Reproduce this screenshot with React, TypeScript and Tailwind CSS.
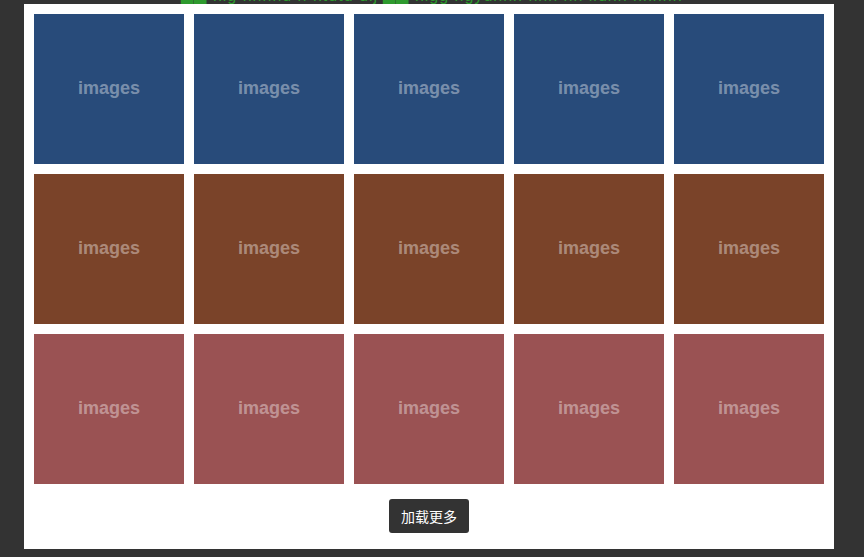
const rows = [
  "bg-[#284b7a]",
  "bg-[#7a4329]",
  "bg-[#9a5253]",
];

function Tile({ color }: { color: string }) {
  return (
    <div className={`${color} w-[150px] h-[150px] flex items-center justify-center`}>
      <span className="pb-[2px] text-white/40 font-bold text-[18px] font-['Liberation_Sans',Arial,sans-serif]">
        images
      </span>
    </div>
  );
}

export default function App() {
  return (
    <div className="w-[864px] h-[557px] bg-[#333333] overflow-hidden">
      <div className="h-[4px] overflow-hidden flex justify-center">
        <div className="-mt-[12px] text-[16px] leading-[16px] tracking-[1px] text-[#2e9a2e] font-['Liberation_Sans',Arial,sans-serif] whitespace-nowrap">
          ▇▇ nlg nnhhu n ntutu ulj ▇▇ nlgg ngyuhnn nnn nn lluhn nhnnn
        </div>
      </div>
      <div className="ml-[24px] w-[810px] h-[545px] bg-white p-[10px] flex flex-col items-center">
        <div className="grid grid-cols-5 gap-[10px]">
          {rows.map((c, r) =>
            [0, 1, 2, 3, 4].map((i) => <Tile key={`${r}-${i}`} color={c} />)
          )}
        </div>
        <button className="mt-[15px] w-[80px] h-[34px] rounded-[3px] bg-[#333333] text-white text-[14px] font-['Noto_Sans_CJK_SC',sans-serif]">
          加载更多
        </button>
      </div>
    </div>
  );
}
